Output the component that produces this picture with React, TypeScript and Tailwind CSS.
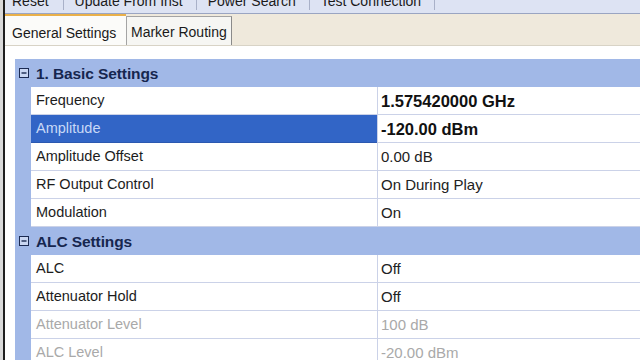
import React from "react";

type Row = { name: string; value: string; strong?: boolean; selected?: boolean; disabled?: boolean };
type Group = { title: string; rows: Row[] };

const groups: Group[] = [
  {
    title: "1. Basic Settings",
    rows: [
      { name: "Frequency", value: "1.575420000 GHz", strong: true },
      { name: "Amplitude", value: "-120.00 dBm", strong: true, selected: true },
      { name: "Amplitude Offset", value: "0.00 dB" },
      { name: "RF Output Control", value: "On During Play" },
      { name: "Modulation", value: "On" },
    ],
  },
  {
    title: "ALC Settings",
    rows: [
      { name: "ALC", value: "Off" },
      { name: "Attenuator Hold", value: "Off" },
      { name: "Attenuator Level", value: "100 dB", disabled: true },
      { name: "ALC Level", value: "-20.00 dBm", disabled: true },
    ],
  },
];

const toolbar = ["Reset", "Update From Inst", "Power Search", "Test Connection"];

const MinusBox = () => (
  <svg width="10" height="10" viewBox="0 0 10 10" className="shrink-0">
    <rect x="0.5" y="0.5" width="9" height="9" fill="#c9d6f2" stroke="#1b2a52" />
    <line x1="2.5" y1="5" x2="7.5" y2="5" stroke="#1b2a52" strokeWidth="1.4" />
  </svg>
);

const GroupHeader = ({ title }: { title: string }) => (
  <div className="h-[28px] shrink-0 flex items-center bg-[#a1b8e7]">
    <div className="w-[16px] flex justify-center pl-[1px]">
      <MinusBox />
    </div>
    <span className="pl-[5px] pt-[1px] text-[15.5px] font-bold text-[#16264f] tracking-[-0.1px]">{title}</span>
  </div>
);

const PropRow = ({ row }: { row: Row }) => (
  <div className="h-[28px] shrink-0 flex">
    <div className="w-[16px] bg-[#a1b8e7] shrink-0" />
    <div
      className={
        row.selected
          ? "w-[346px] shrink-0 flex items-center pl-[5px] pt-[1px] bg-[#3265c6] text-[#c9d9f7] text-[14.5px] border-b border-[#2b58b0]"
          : row.disabled
          ? "w-[346px] shrink-0 flex items-center pl-[5px] pt-[1px] bg-white text-[#a9a9a9] text-[14.5px] border-b border-[#cbd2e8]"
          : "w-[346px] shrink-0 flex items-center pl-[5px] pt-[1px] bg-white text-[#1c1c1c] text-[14.5px] border-b border-[#cbd2e8]"
      }
    >
      {row.name}
    </div>
    <div
      className={
        row.strong
          ? "flex-1 flex items-center pl-[3px] pt-[1px] border-l border-b border-[#cbd2e8] bg-white text-[16.5px] font-bold text-[#111]"
          : row.disabled
          ? "flex-1 flex items-center pl-[3px] pt-[1px] border-l border-b border-[#cbd2e8] bg-white text-[15px] text-[#a9a9a9]"
          : "flex-1 flex items-center pl-[3px] pt-[1px] border-l border-b border-[#cbd2e8] bg-white text-[15px] text-[#222]"
      }
    >
      {row.value}
    </div>
  </div>
);

export default function App() {
  return (
    <div className="w-[640px] h-[360px] overflow-hidden bg-white flex font-['Liberation_Sans',Arial,sans-serif]">
      <div className="w-[3px] bg-[#d9d9d9] shrink-0" />
      <div className="w-[2px] bg-[#1e1e1e] shrink-0" />
      <div className="flex-1 flex flex-col min-w-0">
        {/* toolbar, mostly scrolled off the top */}
        <div className="h-[14px] shrink-0 bg-[#dde3f3] border-b border-[#9aa5c2] flex items-start overflow-hidden">
          {toolbar.map((t, i) => (
            <div key={t} className="flex items-start">
              <span
                className={
                  i === 0
                    ? "pl-[7px] pr-[14px] -mt-[6px] text-[14px] leading-none text-[#1a1a1a] whitespace-nowrap"
                    : "pl-[11px] pr-[13px] -mt-[6px] text-[14px] leading-none text-[#1a1a1a] whitespace-nowrap"
                }
              >
                {t}
              </span>
              <div className="w-px h-[10px] bg-[#a9b1c8]" />
            </div>
          ))}
        </div>

        {/* tabs */}
        <div className="h-[32px] bg-[#efe9dc] flex items-end border-b border-[#d8d3c6] shrink-0">
          <div className="w-[121px] h-full bg-[#fbfbf9] border-t-2 border-[#e9b04a] flex items-center pl-[7px] pt-[5px] text-[14px] text-[#1a1a1a] whitespace-nowrap">
            General Settings
          </div>
          <div className="w-[106px] h-[29px] bg-[#f6f6f3] border border-b-0 border-[#a4a4a4] border-r-[#8a8a8a] flex items-center pl-[4px] pt-[3px] text-[14px] text-[#1a1a1a] whitespace-nowrap">
            Marker Routing
          </div>
        </div>

        <div className="h-[13px] bg-white shrink-0" />

        {/* property grid */}
        <div className="pl-[10px] flex flex-col shrink-0">
          {groups.map((g) => (
            <div key={g.title} className="flex flex-col shrink-0">
              <GroupHeader title={g.title} />
              {g.rows.map((r) => (
                <PropRow key={r.name} row={r} />
              ))}
            </div>
          ))}
        </div>
      </div>
    </div>
  );
}
